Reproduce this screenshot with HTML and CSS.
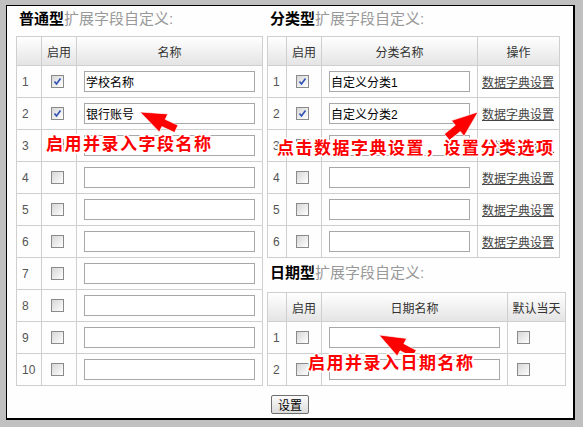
FILE: index.html
```html
<!DOCTYPE html>
<html lang="zh-CN">
    <head>
        <meta charset="utf-8">
        <title>扩展字段自定义</title>
        <link rel="stylesheet" href="styles.css">
    </head>
    <body>
        <div class="panel">
            <div class="cols">
                <div class="col-left">
                    <div class="title"><b>普通型</b>扩展字段自定义:</div>
                    <div class="grid grid-normal">
                        <div class="th"></div><div class="th">启用</div><div class="th">名称</div>

                        <div class="td no">1</div>
                        <div class="td chk"><span class="cb"><svg width="11" height="11" viewBox="0 0 11 11"><path d="M2.5 5.5 L4.5 8 L8.5 2.5" fill="none" stroke="#2f4fb5" stroke-width="1.6"/></svg></span></div>
                        <div class="td"><input class="txt w171" type="text" value="学校名称"></div>

                        <div class="td no">2</div>
                        <div class="td chk"><span class="cb"><svg width="11" height="11" viewBox="0 0 11 11"><path d="M2.5 5.5 L4.5 8 L8.5 2.5" fill="none" stroke="#2f4fb5" stroke-width="1.6"/></svg></span></div>
                        <div class="td"><input class="txt w171" type="text" value="银行账号"></div>

                        <div class="td no">3</div><div class="td chk"><span class="cb"></span></div><div class="td"><input class="txt w171" type="text"></div>
                        <div class="td no">4</div><div class="td chk"><span class="cb"></span></div><div class="td"><input class="txt w171" type="text"></div>
                        <div class="td no">5</div><div class="td chk"><span class="cb"></span></div><div class="td"><input class="txt w171" type="text"></div>
                        <div class="td no">6</div><div class="td chk"><span class="cb"></span></div><div class="td"><input class="txt w171" type="text"></div>
                        <div class="td no">7</div><div class="td chk"><span class="cb"></span></div><div class="td"><input class="txt w171" type="text"></div>
                        <div class="td no">8</div><div class="td chk"><span class="cb"></span></div><div class="td"><input class="txt w171" type="text"></div>
                        <div class="td no">9</div><div class="td chk"><span class="cb"></span></div><div class="td"><input class="txt w171" type="text"></div>
                        <div class="td no">10</div><div class="td chk"><span class="cb"></span></div><div class="td"><input class="txt w171" type="text"></div>
                    </div>
                </div>

                <div class="col-right">
                    <div class="title"><b>分类型</b>扩展字段自定义:</div>
                    <div class="grid grid-class">
                        <div class="th"></div><div class="th">启用</div><div class="th">分类名称</div><div class="th">操作</div>

                        <div class="td no">1</div>
                        <div class="td chk"><span class="cb"><svg width="11" height="11" viewBox="0 0 11 11"><path d="M2.5 5.5 L4.5 8 L8.5 2.5" fill="none" stroke="#2f4fb5" stroke-width="1.6"/></svg></span></div>
                        <div class="td"><input class="txt w141" type="text" value="自定义分类1"></div>
                        <div class="td op"><a href="#">数据字典设置</a></div>

                        <div class="td no">2</div>
                        <div class="td chk"><span class="cb"><svg width="11" height="11" viewBox="0 0 11 11"><path d="M2.5 5.5 L4.5 8 L8.5 2.5" fill="none" stroke="#2f4fb5" stroke-width="1.6"/></svg></span></div>
                        <div class="td"><input class="txt w141" type="text" value="自定义分类2"></div>
                        <div class="td op"><a href="#">数据字典设置</a></div>

                        <div class="td no">3</div><div class="td chk"><span class="cb"></span></div><div class="td"><input class="txt w141" type="text"></div><div class="td op"><a href="#">数据字典设置</a></div>
                        <div class="td no">4</div><div class="td chk"><span class="cb"></span></div><div class="td"><input class="txt w141" type="text"></div><div class="td op"><a href="#">数据字典设置</a></div>
                        <div class="td no">5</div><div class="td chk"><span class="cb"></span></div><div class="td"><input class="txt w141" type="text"></div><div class="td op"><a href="#">数据字典设置</a></div>
                        <div class="td no">6</div><div class="td chk"><span class="cb"></span></div><div class="td"><input class="txt w141" type="text"></div><div class="td op"><a href="#">数据字典设置</a></div>
                    </div>

                    <div class="title title-date"><b>日期型</b>扩展字段自定义:</div>
                    <div class="grid grid-date">
                        <div class="th"></div><div class="th">启用</div><div class="th">日期名称</div><div class="th">默认当天</div>
                        <div class="td no">1</div><div class="td chk"><span class="cb"></span></div><div class="td"><input class="txt w171" type="text"></div><div class="td chk"><span class="cb"></span></div>
                        <div class="td no">2</div><div class="td chk"><span class="cb"></span></div><div class="td"><input class="txt w171" type="text"></div><div class="td chk"><span class="cb"></span></div>
                    </div>
                </div>
            </div>

            <div class="actions"><button class="btn" type="button">设置</button></div>
        </div>

        <!-- annotations drawn over the form -->
        <svg class="arrows" width="583" height="427" viewBox="0 0 583 427">
            <polygon points="0,0 26,-10 26,-4 40,-4 40,4 26,4 26,10" transform="translate(140 112) rotate(25)"/>
            <polygon points="0,0 26,-10 26,-4 40,-4 40,4 26,4 26,10" transform="translate(478 112) rotate(141)"/>
            <polygon points="0,0 26,-10 26,-4 40,-4 40,4 26,4 26,10" transform="translate(379 335) rotate(28)"/>
        </svg>
        <div class="note note1">启用并录入字段名称</div>
        <div class="note note2">点击数据字典设置，设置分类选项</div>
        <div class="note note3">启用并录入日期名称</div>
    </body>
</html>
```

FILE: styles.css
```css
html, body{
    margin: 0;
    background-color: #c0c0c0;
    font-family: "Liberation Sans", "Noto Sans CJK SC", sans-serif;
    font-size: 12px;
    color: #000;
}
.panel{
    box-sizing: border-box;
    margin: 5px 0 0 6px;
    width: 569px;
    height: 415px;
    border: 1px solid #000;
    border-right-width: 2px;
    border-bottom-width: 2px;
    background-color: #fefefe;
    padding: 0 0 0 9px;
}
.cols{
    display: flex;
    gap: 4px;
}
.col-left{
    width: 247px;
}

.title{
    padding: 3px 0 7px 3px;
    line-height: 20px;
    font-size: 15px;
    color: #999;
}
.title b{
    color: #000;
}
.title-date{
    padding-top: 5px;
    padding-bottom: 9px;
}

.grid{
    display: grid;
    grid-template-rows: 29px;
    grid-auto-rows: 32px;
    border-top: 1px solid #cfcfcf;
    border-left: 1px solid #cfcfcf;
    width: max-content;
}
.grid-normal{
    grid-template-columns: 25px 35px 186px;
}
.grid-class{
    grid-template-columns: 19px 35px 156px 82px;
}
.grid-date{
    grid-template-columns: 19px 35px 186px 58px;
}
.th, .td{
    box-sizing: border-box;
    border-right: 1px solid #cfcfcf;
    border-bottom: 1px solid #cfcfcf;
    display: flex;
    align-items: center;
}
.th{
    justify-content: center;
    background: linear-gradient(#ffffff, #e4e4e4);
    color: #333;
}
.td{
    padding-left: 7px;
}
.td.no{
    padding-left: 5px;
    color: #555;
}
.td.chk{
    padding-left: 9px;
}
.td.op{
    padding-left: 4px;
}
.td.op a{
    color: #444;
}

.cb{
    box-sizing: border-box;
    width: 13px;
    height: 13px;
    border: 1px solid #8a8a8a;
    background: linear-gradient(135deg, #d6d6d6, #ffffff);
    display: flex;
}
.txt{
    box-sizing: border-box;
    height: 21px;
    border: 1px solid #a8a8a8;
    padding: 0 1px;
    margin: 0;
    font-family: "Liberation Sans", "Noto Sans CJK SC", sans-serif;
    font-size: 12px;
    color: #000;
    background: #fff;
}
.w171{
    width: 171px;
}
.w141{
    width: 141px;
}

.actions{
    display: flex;
    justify-content: center;
    padding-top: 9px;
    padding-right: 9px;
}
.btn{
    box-sizing: border-box;
    width: 38px;
    height: 19px;
    padding: 0;
    border: 1px solid #6f6f6f;
    border-radius: 2px;
    background: linear-gradient(#fbfbfb, #dcdcdc);
    font-family: "Liberation Sans", "Noto Sans CJK SC", sans-serif;
    font-size: 12px;
    color: #000;
}

.arrows{
    position: absolute;
    left: 0;
    top: 0;
    fill: #ff0000;
    stroke: #fff;
    stroke-width: 0.6;
    pointer-events: none;
}
.note{
    position: absolute;
    font-family: "Noto Sans CJK SC", sans-serif;
    font-weight: bold;
    font-size: 17px;
    line-height: 17px;
    letter-spacing: 1.5px;
    color: #ff0000;
    white-space: nowrap;
    text-shadow: -1px -1px 0 #fff, 1px -1px 0 #fff, -1px 1px 0 #fff, 1px 1px 0 #fff,
                 0 2px 0 #fff, 0 -2px 0 #fff, 2px 0 0 #fff, -2px 0 0 #fff;
}
.note1{
    left: 46px;
    top: 134px;
}
.note2{
    left: 277px;
    top: 138px;
}
.note3{
    left: 308px;
    top: 353px;
}
```
